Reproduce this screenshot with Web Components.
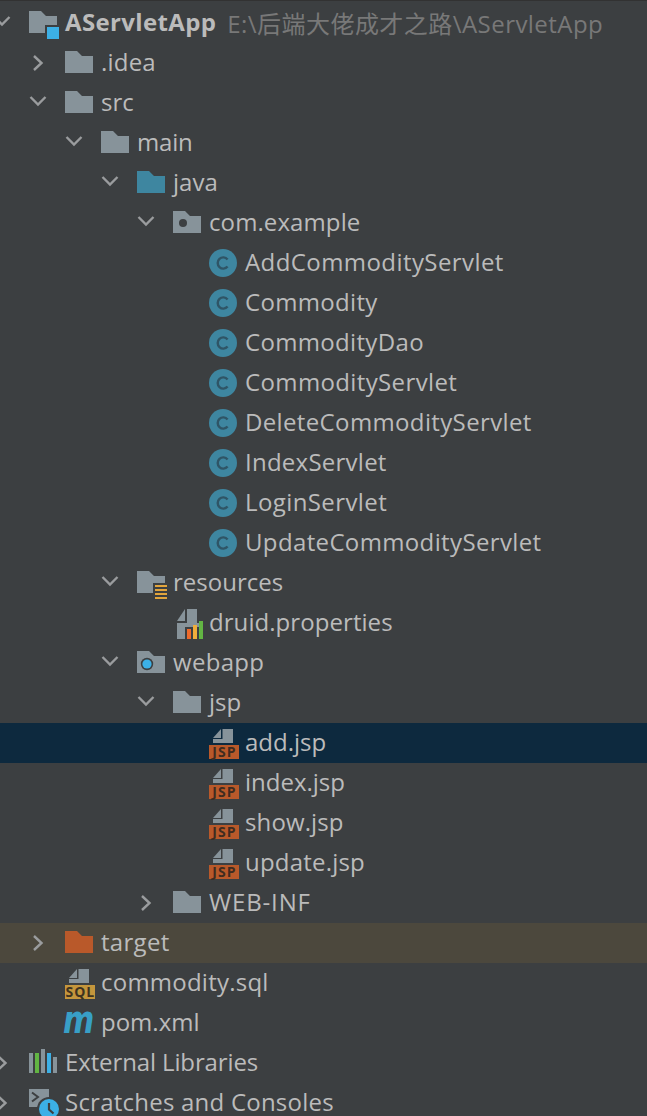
<!DOCTYPE html>
<html>
<head>
<meta charset="utf-8">
<title>Project tree</title>
<style>
  html, body { margin: 0; background: #3c3f41; overflow: hidden; }
</style>
</head>
<body>
<project-tree>
  <tree-row depth="0" chevron="open" icon="module" bold style="--ls:.36px">AServletApp<span slot="hint">E:\后端大佬成才之路\AServletApp</span></tree-row>
  <tree-row depth="1" chevron="closed" icon="folder" style="--ls:.2px">.idea</tree-row>
  <tree-row depth="1" chevron="open" icon="folder">src</tree-row>
  <tree-row depth="2" chevron="open" icon="folder" style="--ls:-.2px">main</tree-row>
  <tree-row depth="3" chevron="open" icon="source">java</tree-row>
  <tree-row depth="4" chevron="open" icon="package" style="--ls:.1px">com.example</tree-row>
  <tree-row depth="5" icon="class" style="--ls:.42px">AddCommodityServlet</tree-row>
  <tree-row depth="5" icon="class" style="--ls:.33px">Commodity</tree-row>
  <tree-row depth="5" icon="class" style="--ls:.33px">CommodityDao</tree-row>
  <tree-row depth="5" icon="class" style="--ls:.37px">CommodityServlet</tree-row>
  <tree-row depth="5" icon="class" style="--ls:.36px">DeleteCommodityServlet</tree-row>
  <tree-row depth="5" icon="class" style="--ls:.25px">IndexServlet</tree-row>
  <tree-row depth="5" icon="class" style="--ls:.4px">LoginServlet</tree-row>
  <tree-row depth="5" icon="class" style="--ls:.36px">UpdateCommodityServlet</tree-row>
  <tree-row depth="3" chevron="open" icon="resources">resources</tree-row>
  <tree-row depth="4" icon="properties" style="--ls:.06px">druid.properties</tree-row>
  <tree-row depth="3" chevron="open" icon="web" style="--ls:.3px">webapp</tree-row>
  <tree-row depth="4" chevron="open" icon="folder">jsp</tree-row>
  <tree-row depth="5" icon="jsp" selected>add.jsp</tree-row>
  <tree-row depth="5" icon="jsp">index.jsp</tree-row>
  <tree-row depth="5" icon="jsp" style="--ls:.12px">show.jsp</tree-row>
  <tree-row depth="5" icon="jsp" style="--ls:.2px">update.jsp</tree-row>
  <tree-row depth="4" chevron="closed" icon="folder" style="--ls:.85px">WEB-INF</tree-row>
  <tree-row depth="1" chevron="closed" icon="excluded" excluded style="--ls:.3px">target</tree-row>
  <tree-row depth="1" icon="sql" style="--ls:.23px">commodity.sql</tree-row>
  <tree-row depth="1" icon="maven">pom.xml</tree-row>
  <tree-row depth="0" chevron="closed" icon="libraries" style="--ls:-.12px">External Libraries</tree-row>
  <tree-row depth="0" chevron="closed" icon="scratches" style="--ls:.23px">Scratches and Consoles</tree-row>
</project-tree>

<script>
// Colours shared by the icons
const GREY = '#87939a';
const BG = '#3c3f41';
const FOLDER = 'M0 8H12L17 13H28V30H0Z';

// The page-with-fold shape used above the JSP and SQL badges
const filePage = `
  <path d="M4 15 12 6V15Z" fill="${GREY}"/>
  <path d="M13.5 6H24V20H4V16H13.5Z" fill="${GREY}"/>`;

function badge(label, color, textColor) {
  return `${filePage}
    <rect x="0" y="22" width="30" height="14" fill="${color}"/>
    <text x="15.4" y="34" text-anchor="middle" font-family="'Open Sans', sans-serif" font-weight="700" font-size="14" letter-spacing="1" fill="${textColor}">${label}</text>`;
}

// All icons are drawn relative to the 40px row: y 0 is the top of the row
const ICONS = {
  folder: `<path d="${FOLDER}" fill="${GREY}"/>`,
  source: `<path d="${FOLDER}" fill="#3e86a0"/>`,
  excluded: `<path d="${FOLDER}" fill="#b9592a"/>`,
  module: `<path d="M0 8H12L17 13H28V22H16V30H0Z" fill="${GREY}"/>
    <rect x="18" y="24" width="12" height="12" fill="#3cb0e6"/>`,
  package: `<path d="${FOLDER}" fill="${GREY}"/><circle cx="10" cy="20" r="4" fill="${BG}"/>`,
  web: `<path d="${FOLDER}" fill="${GREY}"/>
    <circle cx="10" cy="21" r="6.2" fill="${BG}"/><circle cx="10" cy="21" r="4.6" fill="#3cb0e6"/>`,
  resources: `<path d="M0 8H12L17 13H28V20H16V30H0Z" fill="${GREY}"/>
    <path d="M18 23H30M18 27H30M18 31H30M18 35H30" stroke="#e2a53c" stroke-width="2"/>`,
  class: `<circle cx="14" cy="20" r="14" fill="#3e86a0"/>
    <path d="M18.6 16.4A5.6 5.6 0 1 0 18.6 23.6" fill="none" stroke="#2f5566" stroke-width="2.4"/>`,
  properties: `<path d="M4 18 12 6V18Z" fill="${GREY}"/>
    <path d="M14 6H24V20H26V36H4V20H14Z" fill="${GREY}"/>
    <rect x="12" y="24" width="20" height="12" fill="${BG}"/>
    <rect x="14" y="26" width="4" height="10" fill="#ee6a2b"/>
    <rect x="20" y="22" width="4" height="14" fill="#f0ad3c"/>
    <rect x="26" y="18" width="4" height="18" fill="#62b543"/>`,
  jsp: badge('JSP', '#b9592a', '#3f2c20'),
  sql: badge('SQL', '#c4963c', '#3f3320'),
  maven: `<text x="-2" y="30" transform="translate(0 -8) scale(1 1.27)" font-family="'DejaVu Sans', sans-serif" font-weight="700" font-style="italic" font-size="30" fill="#389fc6">m</text>`,
  libraries: `<rect x="0" y="10" width="4" height="20" fill="${GREY}"/>
    <rect x="6" y="10" width="4" height="20" fill="#62b543"/>
    <rect x="12" y="6" width="4" height="24" fill="${GREY}"/>
    <rect x="18" y="10" width="4" height="20" fill="#3cb0e6"/>
    <rect x="24" y="14" width="4" height="16" fill="${GREY}"/>`,
  scratches: `<rect x="0" y="6" width="20" height="18" fill="${GREY}"/>
    <path d="M3 9.5 9 14 3 18.5" fill="none" stroke="${BG}" stroke-width="2"/>
    <circle cx="20" cy="26" r="12" fill="${BG}"/>
    <circle cx="20" cy="26" r="10" fill="#3cb0e6"/>
    <path d="M20 20V26.5L24.5 30.5" fill="none" stroke="${BG}" stroke-width="2.2"/>`
};

const CHEVRONS = {
  open: 'M2.5 14 10 21.5 17.5 14',
  closed: 'M6 13 13.5 20 6 27'
};

/**
 * One line of the tree. Indent comes from the depth attribute,
 * the label is slotted, a grey hint can go in slot="hint".
 */
class TreeRow extends HTMLElement {
  connectedCallback() {
    const depth = Number(this.getAttribute('depth') || 0);
    const chevron = CHEVRONS[this.getAttribute('chevron')];
    const icon = ICONS[this.getAttribute('icon')] || '';

    this.style.setProperty('--depth', depth);
    this.attachShadow({ mode: 'open' });
    this.shadowRoot.innerHTML = `
      <style>
        :host {
          display: flex;
          align-items: center;
          height: 40px;
          white-space: nowrap;
          color: #bbbbbb;
        }
        :host([selected]) { background: #0d293e; }
        :host([excluded]) { background: #4c483d; }
        :host([bold]) .label { font-weight: 700; }

        .chevron {
          flex: none;
          width: 20px;
          height: 40px;
          margin-left: calc(var(--depth) * 36px - 8px);
          margin-right: 17px;
        }
        .icon {
          flex: none;
          width: 36px;
          height: 40px;
          overflow: visible;
        }
        .label {
          line-height: 38px;
          margin-top: -2px;
          letter-spacing: var(--ls, 0);
        }
        ::slotted([slot="hint"]) {
          margin-left: 11px;
          margin-top: -2px;
          letter-spacing: .45px;
          color: #787878;
        }
      </style>
      <svg class="chevron" viewBox="0 0 20 40">
        ${chevron ? `<path d="${chevron}" fill="none" stroke="#9a9c9e" stroke-width="2.4"/>` : ''}
      </svg>
      <svg class="icon" viewBox="0 0 36 40">${icon}</svg>
      <span class="label"><slot></slot></span>
      <slot name="hint"></slot>
    `;
  }
}

/**
 * Panel around the rows, sets the font everything inherits
 */
class ProjectTree extends HTMLElement {
  constructor() {
    super();
    this.attachShadow({ mode: 'open' });
    this.shadowRoot.innerHTML = `
      <style>
        :host {
          display: block;
          height: 1116px;
          box-sizing: border-box;
          padding-top: 2px;
          border-top: 1px solid #323232;
          overflow: hidden;
          background: #3c3f41;
          font-family: "Open Sans", "Noto Sans CJK SC", sans-serif;
          font-size: 24px;
        }
      </style>
      <slot></slot>
    `;
  }
}

customElements.define('tree-row', TreeRow);
customElements.define('project-tree', ProjectTree);
</script>
</body>
</html>
